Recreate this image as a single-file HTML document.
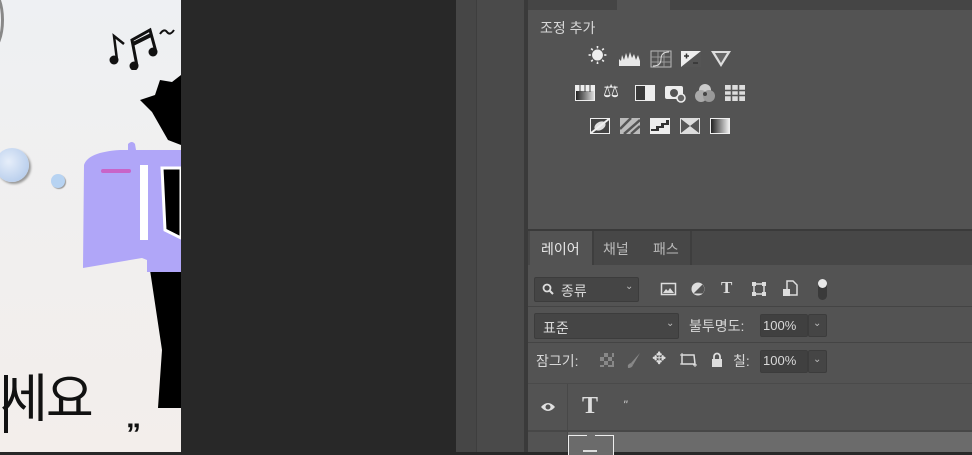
<!DOCTYPE html>
<html><head><meta charset="utf-8"><style>
*{margin:0;padding:0;box-sizing:border-box}
body{width:972px;height:452px;overflow:hidden;position:relative;background:#282828;font-family:"Liberation Sans","Noto Sans CJK KR",sans-serif;color:#ddd}
.a{position:absolute}
.t{font-size:13px;color:#d8d8d8}
.box{position:absolute;background:#454545;border:1px solid #3c3c3c;border-radius:2px}
</style></head><body>
<div class="a" style="left:0;top:0;width:181px;height:452px;background:linear-gradient(180deg,#eef0f3,#f1efee 60%,#f3eeeb)"></div>
<div class="a" style="left:-20px;top:-10px;width:24px;height:60px;border-radius:50%;border:3px solid #888"></div>
<div class="a" style="left:-5px;top:148px;width:34px;height:34px;border-radius:50%;background:radial-gradient(circle at 40% 40%,#e6eefa,#aac4e8);box-shadow:2px 2px 2px #999"></div>
<div class="a" style="left:51px;top:174px;width:14px;height:14px;border-radius:50%;background:#b7d3f2;box-shadow:1px 1px 1px #999"></div>
<svg class="a" style="left:104px;top:24px" width="80" height="46">
<g fill="#111" stroke="#111">
<circle cx="10" cy="36" r="4.5" stroke="none"/><path d="M13 36L10 12L20 20" stroke-width="2.5" fill="none"/>
<circle cx="30" cy="42" r="4.5" stroke="none"/><circle cx="49" cy="28" r="4.5" stroke="none"/>
<path d="M33 42L28 16L46 6L52 28" stroke-width="3" fill="none"/><path d="M29 20L47 11" stroke-width="4"/>
<path d="M56 10Q60 4 63 8T70 6" stroke-width="2" fill="none"/>
</g></svg>
<svg class="a" style="left:0;top:0" width="181" height="452">
<polygon points="181,75 172,82 160,80 155,95 140,100 152,112 168,140 181,145" fill="#000"/>
<polygon points="150,270 181,270 181,408 158,408 162,350" fill="#000"/>
<path d="M84 165 Q88 152 120 150 L128 150 L128 144 Q132 140 135 144 L136 150 L181 150 L181 272 L147 272 L147 260 L142 258 L83 268 Z" fill="#b0a6f8"/>
<rect x="140" y="165" width="8" height="75" fill="#fff"/>
<path d="M162 168 L181 168 L181 238 L165 230 Z" fill="#000" stroke="#fff" stroke-width="3"/>
<rect x="101" y="169" width="30" height="4" rx="2" fill="#c864c8"/>
</svg>
<div class="a" style="left:0;top:370px;font-size:52px;color:#111;line-height:60px;letter-spacing:-2px">세요</div>
<div class="a" style="left:4px;top:375px;width:4px;height:58px;background:#111"></div>
<div class="a" style="left:126px;top:420px;font-size:30px;font-weight:bold;color:#111;line-height:30px">”</div>

<div class="a" style="left:456px;top:0;width:20px;height:452px;background:#464646"></div>
<div class="a" style="left:476px;top:0;width:48px;height:452px;background:#4a4a4a;border-left:1px solid #3e3e3e"></div>
<div class="a" style="left:524px;top:0;width:4px;height:452px;background:#3a3a3a"></div>

<div class="a" style="left:528px;top:0;width:444px;height:229px;background:#535353"></div>
<div class="a" style="left:528px;top:0;width:89px;height:10px;background:#454545"></div>
<div class="a" style="left:670px;top:0;width:302px;height:10px;background:#454545"></div>
<div class="a t" style="left:540px;top:18px;font-size:14px">조정 추가</div>
<div class="a" style="left:588px;top:47px;font-size:19px;color:#eee;line-height:20px">☀</div>
<svg class="a" style="left:618px;top:49px" width="24" height="18"><path d="M1 17V10L3 12L4 6L6 11L8 4L10 10L12 3L14 9L16 5L18 11L20 6L22 12V17Z" fill="#e8e8e8"/></svg>
<svg class="a" style="left:650px;top:50px" width="22" height="18"><rect x="1" y="1" width="20" height="16" fill="none" stroke="#bbb"/><path d="M1 7H21M1 12H21M8 1V17M14 1V17" stroke="#999"/><path d="M3 16Q11 16 11 9T19 2" stroke="#ddd" fill="none"/></svg>
<svg class="a" style="left:680px;top:50px" width="22" height="18"><rect x="1" y="1" width="20" height="16" fill="#eee"/><path d="M1 17L21 1V17Z" fill="#555"/><path d="M4 6H9M6.5 3.5V8.5M13 13H18" stroke="#333" stroke-width="1.5"/></svg>
<svg class="a" style="left:710px;top:50px" width="22" height="18"><path d="M1 1H21L11 17Z" fill="#ddd"/><path d="M5 3H17L11 13Z" fill="#666"/></svg>
<svg class="a" style="left:574px;top:84px" width="22" height="18"><defs><linearGradient id="g"><stop offset="0" stop-color="#222"/><stop offset="1" stop-color="#ddd"/></linearGradient></defs><rect x="1" y="1" width="20" height="16" fill="#eee"/><rect x="2" y="7" width="18" height="9" fill="url(#g)"/><path d="M6 1V8M11 1V8M16 1V8" stroke="#444"/></svg>
<div class="a" style="left:603px;top:81px;font-size:18px;color:#eee">⚖</div>
<svg class="a" style="left:634px;top:84px" width="22" height="18"><rect x="1" y="1" width="20" height="16" fill="#eee"/><rect x="2" y="2" width="9" height="14" fill="#3a3a3a"/></svg>
<svg class="a" style="left:664px;top:83px" width="24" height="20"><rect x="1" y="3" width="18" height="13" rx="2" fill="#eee"/><circle cx="10" cy="10" r="4" fill="#555"/><circle cx="17" cy="15" r="4" fill="#666" stroke="#eee" stroke-width="1.5"/></svg>
<svg class="a" style="left:694px;top:83px" width="22" height="20"><circle cx="11" cy="7" r="6" fill="#ccc"/><circle cx="7" cy="13" r="6" fill="#aaa"/><circle cx="15" cy="13" r="6" fill="#999"/><circle cx="11" cy="11" r="2" fill="#444"/></svg>
<svg class="a" style="left:724px;top:84px" width="22" height="18"><rect x="1" y="1" width="20" height="16" fill="#ddd"/><path d="M1 6.5H21M1 11.5H21M7.5 1V17M14.5 1V17" stroke="#555" stroke-width="1.5"/></svg>
<svg class="a" style="left:589px;top:117px" width="22" height="18"><rect x="1" y="1" width="20" height="16" fill="#eee"/><rect x="2" y="2" width="18" height="14" fill="#444"/><ellipse cx="11" cy="9" rx="6" ry="4" fill="#ddd" transform="rotate(-30 11 9)"/><path d="M2 16L20 2" stroke="#eee" stroke-width="2"/></svg>
<svg class="a" style="left:619px;top:117px" width="22" height="18"><rect x="1" y="1" width="20" height="16" fill="#bbb"/><path d="M1 12L12 1M5 17L21 3M12 17L21 9" stroke="#555" stroke-width="2.5"/></svg>
<svg class="a" style="left:649px;top:117px" width="22" height="18"><rect x="1" y="1" width="20" height="16" fill="#eee"/><path d="M2 12H7V9H12V6H17V3H20V8H15V11H10V14H2Z" fill="#333"/></svg>
<svg class="a" style="left:679px;top:117px" width="22" height="18"><rect x="1" y="1" width="20" height="16" fill="#ddd"/><path d="M2 2L11 9L2 16ZM20 2L11 9L20 16Z" fill="#555"/></svg>
<svg class="a" style="left:709px;top:117px" width="22" height="18"><defs><linearGradient id="h"><stop offset="0" stop-color="#222"/><stop offset="1" stop-color="#eee"/></linearGradient></defs><rect x="1" y="1" width="20" height="16" fill="#eee"/><rect x="2" y="2" width="18" height="14" fill="url(#h)"/></svg>

<div class="a" style="left:528px;top:229px;width:444px;height:2px;background:#3a3a3a"></div>
<div class="a" style="left:528px;top:231px;width:444px;height:34px;background:#474747"></div>
<div class="a" style="left:530px;top:231px;width:62px;height:35px;background:#535353"></div>
<div class="a" style="left:592px;top:231px;width:2px;height:34px;background:#3e3e3e"></div>
<div class="a" style="left:690px;top:231px;width:2px;height:34px;background:#3e3e3e"></div>
<div class="a t" style="left:541px;top:239px;color:#e8e8e8;font-size:14px">레이어</div>
<div class="a t" style="left:603px;top:239px;color:#bbb;font-size:14px">채널</div>
<div class="a t" style="left:653px;top:239px;color:#bbb;font-size:14px">패스</div>
<div class="a" style="left:528px;top:265px;width:444px;height:187px;background:#535353"></div>
<div class="a" style="left:528px;top:306px;width:444px;height:1px;background:#444"></div>
<div class="a" style="left:528px;top:342px;width:444px;height:1px;background:#444"></div>
<div class="box" style="left:534px;top:277px;width:105px;height:25px"></div>
<svg class="a" style="left:542px;top:283px" width="12" height="13"><circle cx="5" cy="5" r="3.5" fill="none" stroke="#ddd" stroke-width="1.8"/><path d="M7.5 7.5L11 11" stroke="#ddd" stroke-width="2"/></svg>
<div class="a t" style="left:561px;top:281px;font-size:14px">종류</div>
<div class="a" style="left:625px;top:281px;font-size:10px;color:#bbb">⌄</div>
<svg class="a" style="left:660px;top:281px" width="18" height="16"><rect x="1.5" y="2.5" width="14" height="11" fill="none" stroke="#ddd" stroke-width="1.5"/><path d="M3 12L6 8L8 10L10 7L14 12Z" fill="#ddd"/></svg>
<svg class="a" style="left:690px;top:281px" width="16" height="16"><circle cx="8" cy="8" r="6.5" fill="#ddd"/><path d="M3.5 12.5L12.5 3.5A6.5 6.5 0 0 1 12.5 12.5Z" fill="#535353"/></svg>
<div class="a" style="left:721px;top:278px;font-size:17px;font-weight:bold;color:#ddd;font-family:'Liberation Serif',serif">T</div>
<svg class="a" style="left:751px;top:281px" width="16" height="16"><rect x="3" y="3" width="10" height="10" fill="none" stroke="#ddd" stroke-width="1.5"/><rect x="1" y="1" width="4" height="4" fill="#ddd"/><rect x="11" y="1" width="4" height="4" fill="#ddd"/><rect x="1" y="11" width="4" height="4" fill="#ddd"/><rect x="11" y="11" width="4" height="4" fill="#ddd"/></svg>
<svg class="a" style="left:782px;top:280px" width="16" height="18"><path d="M5 1H11L15 5V15H5Z" fill="none" stroke="#ddd" stroke-width="1.5"/><rect x="1" y="9" width="7" height="7" fill="#ddd"/></svg>
<div class="a" style="left:818px;top:280px;width:9px;height:20px;border-radius:5px;background:#3a3a3a"></div>
<div class="a" style="left:818px;top:279px;width:9px;height:9px;border-radius:50%;background:#e8e8e8"></div>

<div class="box" style="left:534px;top:313px;width:145px;height:26px"></div>
<div class="a t" style="left:543px;top:318px;font-size:14px">표준</div>
<div class="a" style="left:666px;top:318px;font-size:10px;color:#bbb">⌄</div>
<div class="a t" style="left:689px;top:316px;font-size:14px">불투명도:</div>
<div class="box" style="left:760px;top:314px;width:48px;height:23px;background:#404040"></div>
<div class="a t" style="left:763px;top:318px">100%</div>
<div class="box" style="left:808px;top:314px;width:19px;height:23px"></div>
<div class="a" style="left:813px;top:318px;font-size:10px;color:#bbb">⌄</div>

<div class="a t" style="left:536px;top:351px;font-size:14px">잠그기:</div>
<svg class="a" style="left:600px;top:353px" width="14" height="14"><rect width="14" height="14" fill="#888"/><path d="M0 0h4v4H0zM8 0h4v4H8zM4 4h4v4H4zM12 4h2v4h-2zM0 8h4v4H0zM8 8h4v4H8zM4 12h4v2H4z" fill="#555"/></svg>
<svg class="a" style="left:626px;top:352px" width="16" height="17"><path d="M14 1L5 11L7 13Z" fill="#888"/><path d="M5 11Q1 12 2 16Q6 16 7 13Z" fill="#888"/></svg>
<div class="a" style="left:652px;top:349px;font-size:17px;color:#ddd">✥</div>
<svg class="a" style="left:679px;top:352px" width="18" height="16"><path d="M3 3H15L16 12H3Z" fill="none" stroke="#ddd" stroke-width="1.5"/><path d="M1 3H5M3 1V5M14 13H18M16 11V15M1 12H5" stroke="#ddd"/></svg>
<svg class="a" style="left:710px;top:352px" width="14" height="16"><path d="M4 7V4.5A3 3 0 0 1 10 4.5V7" fill="none" stroke="#ddd" stroke-width="1.8"/><rect x="2" y="7" width="10" height="8" fill="#ddd"/></svg>
<div class="a t" style="left:733px;top:351px;font-size:14px">칠:</div>
<div class="box" style="left:760px;top:350px;width:48px;height:23px;background:#404040"></div>
<div class="a t" style="left:763px;top:353px">100%</div>
<div class="box" style="left:808px;top:350px;width:19px;height:23px"></div>
<div class="a" style="left:813px;top:354px;font-size:10px;color:#bbb">⌄</div>

<div class="a" style="left:528px;top:383px;width:444px;height:1px;background:#4a4a4a"></div>
<div class="a" style="left:567px;top:384px;width:1px;height:68px;background:#484848"></div>
<svg class="a" style="left:540px;top:401px" width="16" height="12"><path d="M1 6Q8 -2 15 6Q8 14 1 6Z" fill="#e0e0e0"/><circle cx="8" cy="6" r="2.5" fill="#535353"/></svg>
<div class="a" style="left:582px;top:393px;font-size:24px;font-weight:bold;color:#ddd;font-family:'Liberation Serif',serif">T</div>
<div class="a" style="left:623px;top:398px;font-size:12px;color:#ccc;font-style:italic">"</div>
<div class="a" style="left:528px;top:430px;width:444px;height:2px;background:#474747"></div>
<div class="a" style="left:568px;top:432px;width:404px;height:20px;background:#6b6b6b"></div>
<div class="a" style="left:568px;top:435px;width:46px;height:20px;border:1px solid #eee;border-bottom:none;background:#6b6b6b"></div>
<div class="a" style="left:587px;top:435px;width:8px;height:1px;background:#6b6b6b"></div>
<div class="a" style="left:583px;top:450px;width:14px;height:2px;background:#ddd"></div>
</body></html>
